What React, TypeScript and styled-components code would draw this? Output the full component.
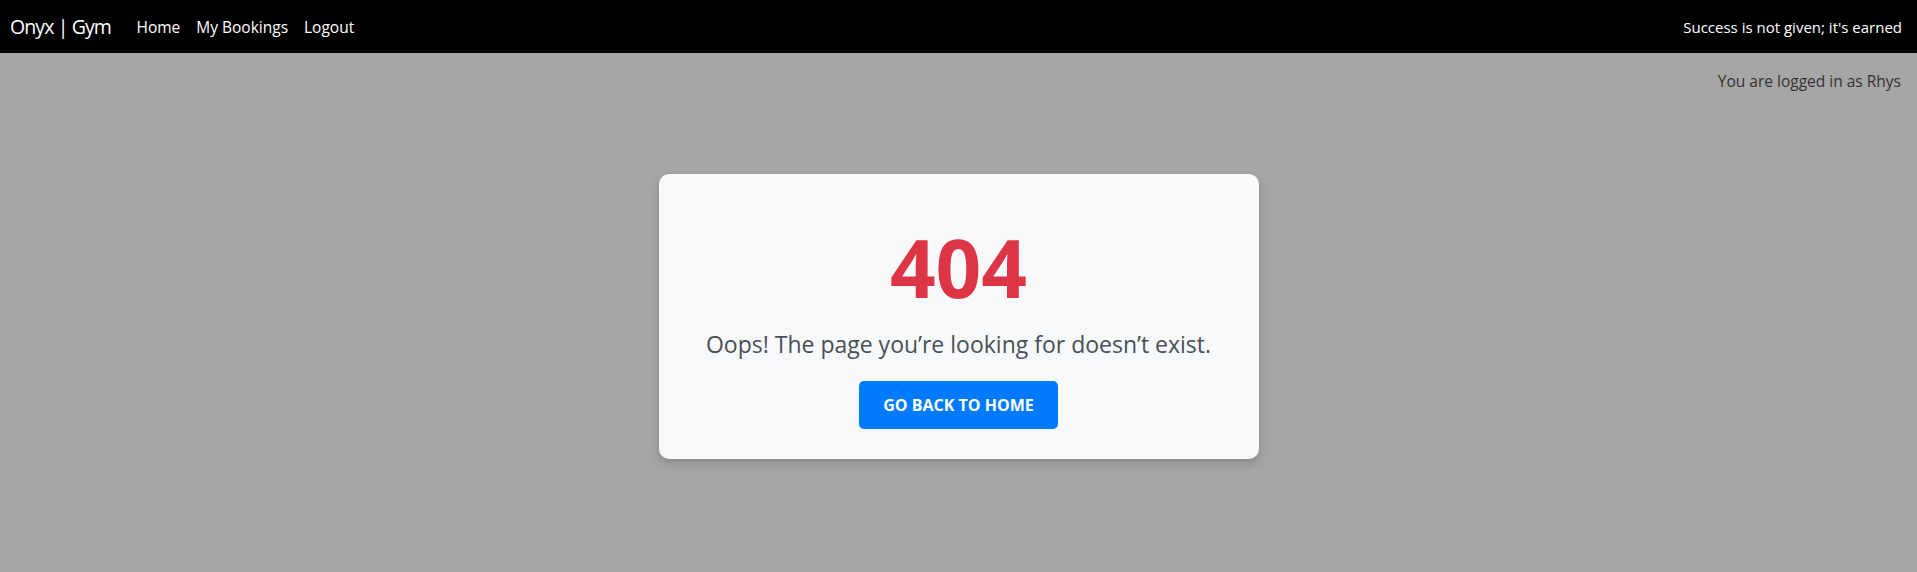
import React from 'react'
import styled, { createGlobalStyle } from 'styled-components';

const GlobalStyle = createGlobalStyle`
    html, body {
        margin: 0;
        padding: 0;
        height: 100%;
    }
    body {
        background-color: #a6a6a6;
        font-family: "Open Sans", "Noto Sans", sans-serif;
        color: #212529;
    }
    #root {
        min-height: 100%;
    }
`

const links = ["Home", "My Bookings", "Logout"];

const App = () => {
    return (<>
        <GlobalStyle />
        <Page>
            <NavBar>
                <Brand>Onyx | Gym</Brand>
                <NavLinks>
                    {links.map((l) => <NavLink key={l} href="#">{l}</NavLink>)}
                </NavLinks>
                <Motto>Success is not given; it's earned</Motto>
            </NavBar>
            <LoggedIn>You are logged in as Rhys</LoggedIn>
            <Main>
                <Card>
                    <ErrorCode>404</ErrorCode>
                    <Message>Oops! The page you’re looking for doesn’t exist.</Message>
                    <HomeButton href="#">Go back to home</HomeButton>
                </Card>
            </Main>
        </Page>
    </>
    )
}

export default App;

const Page = styled.div`
    min-height: 572px;
    display: flex;
    flex-direction: column;
`

const NavBar = styled.nav`
    height: 53px;
    background-color: #000;
    display: flex;
    align-items: center;
    padding: 0 15px 0 10px;
    color: #fff;
`

const Brand = styled.span`
    font-size: 19.5px;
    margin-right: 17.5px;
    letter-spacing: -0.9px;
`

const NavLinks = styled.div`
    display: flex;
    flex: 1;
`

const NavLink = styled.a`
    color: #fff;
    text-decoration: none;
    font-size: 15.5px;
    padding: 0 8px;
`

const Motto = styled.span`
    font-size: 15px;
`

const LoggedIn = styled.div`
    text-align: right;
    padding: 17px 16px 0 0;
    font-size: 15.5px;
    color: #333;
`

const Main = styled.main`
    display: flex;
    justify-content: center;
    padding-top: 82px;
`

const Card = styled.div`
    width: 600px;
    box-sizing: border-box;
    background-color: #f8f9fa;
    border-radius: 10px;
    box-shadow: 0 4px 10px rgba(0, 0, 0, 0.18);
    padding: 45px 40px 30px;
    display: flex;
    flex-direction: column;
    align-items: center;
    text-align: center;
`

const ErrorCode = styled.h1`
    margin: 0 0 12px;
    font-size: 80px;
    line-height: 96px;
    font-weight: 700;
    color: #dc3545;
`

const Message = styled.p`
    margin: 0 0 20px;
    font-size: 23px;
    line-height: 34px;
    color: #495057;
`

const HomeButton = styled.a`
    display: inline-block;
    background-color: #007bff;
    color: #fff;
    text-decoration: none;
    text-transform: uppercase;
    font-weight: 700;
    font-size: 16px;
    line-height: 24px;
    padding: 12px 24px;
    border-radius: 5px;
`
